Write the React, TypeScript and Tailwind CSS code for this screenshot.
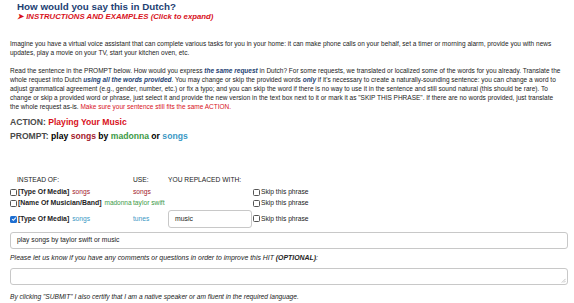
import React from 'react';

const SONGS_RED = 'text-[#a3182b]';
const MADONNA_GREEN = 'text-[#3c9a46]';
const SONGS_BLUE = 'text-[#3a97c4]';

function Box({ checked = false }: { checked?: boolean }) {
  if (checked) {
    return (
      <span className="inline-flex w-[7px] h-[7px] rounded-[1.5px] bg-[#1f6fd1] items-center justify-center shrink-0">
        <svg viewBox="0 0 8 8" className="w-[6px] h-[6px]">
          <path d="M1.5 4.2 L3.2 5.8 L6.5 2.2" stroke="white" strokeWidth="1.4" fill="none" />
        </svg>
      </span>
    );
  }
  return <span className="inline-block w-[7px] h-[7px] rounded-[1.5px] border border-[#555] bg-white shrink-0" />;
}

function Skip() {
  return (
    <div className="flex items-center gap-[1px] text-[6.7px] text-[#222]">
      <Box />
      <span>Skip this phrase</span>
    </div>
  );
}

export default function App() {
  return (
    <div className="w-[574px] h-[303px] overflow-hidden bg-white px-[10px] pt-[2px] font-['Liberation_Sans',Arial,sans-serif] text-[#222]">
      {/* Heading */}
      <div className="pl-[7px]">
        <div className="text-[9.8px] leading-[10px] font-bold text-[#1d3f73]">How would you say this in Dutch?</div>
        <div className="text-[7.8px] leading-[10px] font-bold italic text-[#d8111b]">➤ INSTRUCTIONS AND EXAMPLES (Click to expand)</div>
      </div>

      {/* Instructions */}
      <div className="mt-[16.5px] text-[6.5px] leading-[9px] whitespace-nowrap">
        Imagine you have a virtual voice assistant that can complete various tasks for you in your home: it can make phone calls on your behalf, set a timer or morning alarm, provide you with news
        <br />
        updates, play a movie on your TV, start your kitchen oven, etc.
      </div>
      <div className="mt-[9px] text-[6.5px] leading-[9px] whitespace-nowrap">
        Read the sentence in the PROMPT below. How would you express <b className="italic text-[#1d3f73]">the same request</b> in Dutch? For some requests, we translated or localized some of the words for you already. Translate the
        <br />
        whole request into Dutch <b className="italic text-[#1d3f73]">using all the words provided</b>. You may change or skip the provided words <b className="italic text-[#1d3f73]">only</b> if it's necessary to create a naturally-sounding sentence: you can change a word to
        <br />
        adjust grammatical agreement (e.g., gender, number, etc.) or fix a typo; and you can skip the word if there is no way to use it in the sentence and still sound natural (this should be rare). To
        <br />
        change or skip a provided word or phrase, just select it and provide the new version in the text box next to it or mark it as "SKIP THIS PHRASE". If there are no words provided, just translate
        <br />
        the whole request as-is. <span className="text-[#d8111b]">Make sure your sentence still fits the same ACTION.</span>
      </div>

      {/* Action & prompt */}
      <div className="mt-[4.5px] text-[8.6px] leading-[14px] font-bold">
        <div>
          <span className="text-[#4a4a4a]">ACTION: </span>
          <span className="text-[#d8111b]">Playing Your Music</span>
        </div>
        <div>
          <span className="text-[#4a4a4a]">PROMPT: </span>
          <span className="text-black">play </span>
          <span className={SONGS_RED}>songs</span>
          <span className="text-black"> by </span>
          <span className={MADONNA_GREEN}>madonna</span>
          <span className="text-black"> or </span>
          <span className={SONGS_BLUE}>songs</span>
        </div>
      </div>

      {/* Replacement table */}
      <div className="mt-[32px] grid grid-cols-[123px_35px_85px_1fr] text-[6.7px] whitespace-nowrap">
        <div className="h-[10px] flex items-center pl-[7px]">INSTEAD OF:</div>
        <div className="h-[10px] flex items-center">USE:</div>
        <div className="h-[10px] flex items-center col-span-2">YOU REPLACED WITH:</div>

        <div className="mt-[2px] h-[10px] flex items-center gap-[1px]">
          <Box />
          <span className="font-bold text-[6.9px]">[Type Of Media]</span>
          <span className={`ml-[2px] ${SONGS_RED}`}>songs</span>
        </div>
        <div className={`mt-[2px] h-[10px] flex items-center ${SONGS_RED}`}>songs</div>
        <div className="mt-[2px] h-[10px]" />
        <div className="mt-[2px] h-[10px] flex items-center"><Skip /></div>

        <div className="mt-[1px] h-[10px] flex items-center gap-[1px]">
          <Box />
          <span className="font-bold text-[6.9px]">[Name Of Musician/Band]</span>
          <span className={`ml-[2px] text-[6.5px] ${MADONNA_GREEN}`}>madonna</span>
        </div>
        <div className={`mt-[1px] h-[10px] flex items-center ${MADONNA_GREEN}`}>taylor swift</div>
        <div className="mt-[1px] h-[10px]" />
        <div className="mt-[1px] h-[10px] flex items-center"><Skip /></div>

        <div className="mt-[2px] h-[18px] flex items-center gap-[1px]">
          <Box checked />
          <span className="font-bold text-[6.9px]">[Type Of Media]</span>
          <span className={`ml-[2px] ${SONGS_BLUE}`}>songs</span>
        </div>
        <div className={`mt-[2px] h-[18px] flex items-center ${SONGS_BLUE}`}>tunes</div>
        <div className="mt-[2px] h-[18px] pr-[1px]">
          <div className="h-full border border-[#c8c8c8] rounded-[3px] flex items-center px-[6px] text-[6.9px]">music</div>
        </div>
        <div className="mt-[2px] h-[18px] flex items-center"><Skip /></div>
      </div>

      {/* Full translation */}
      <div className="mt-[4px] h-[17px] w-[558px] border border-[#c8c8c8] rounded-[3px] flex items-center px-[6px] text-[6.75px]">
        play songs by taylor swift or music
      </div>

      {/* Comments */}
      <div className="mt-[4px] h-[10px] flex items-center text-[6.9px] italic whitespace-nowrap">
        Please let us know if you have any comments or questions in order to improve this HIT&nbsp;<b>(OPTIONAL)</b>:
      </div>
      <div className="relative mt-[5px] h-[17px] w-[558px] border border-[#c8c8c8] rounded-[3px]">
        <svg viewBox="0 0 6 6" className="absolute right-[1px] bottom-[1px] w-[5px] h-[5px]">
          <path d="M5.5 1 L1 5.5 M5.5 3.5 L3.5 5.5" stroke="#999" strokeWidth="0.7" />
        </svg>
      </div>

      <div className="mt-[7px] h-[10px] flex items-center text-[6.6px] italic whitespace-nowrap">
        By clicking "SUBMIT" I also certify that I am a native speaker or am fluent in the required language.
      </div>
    </div>
  );
}
